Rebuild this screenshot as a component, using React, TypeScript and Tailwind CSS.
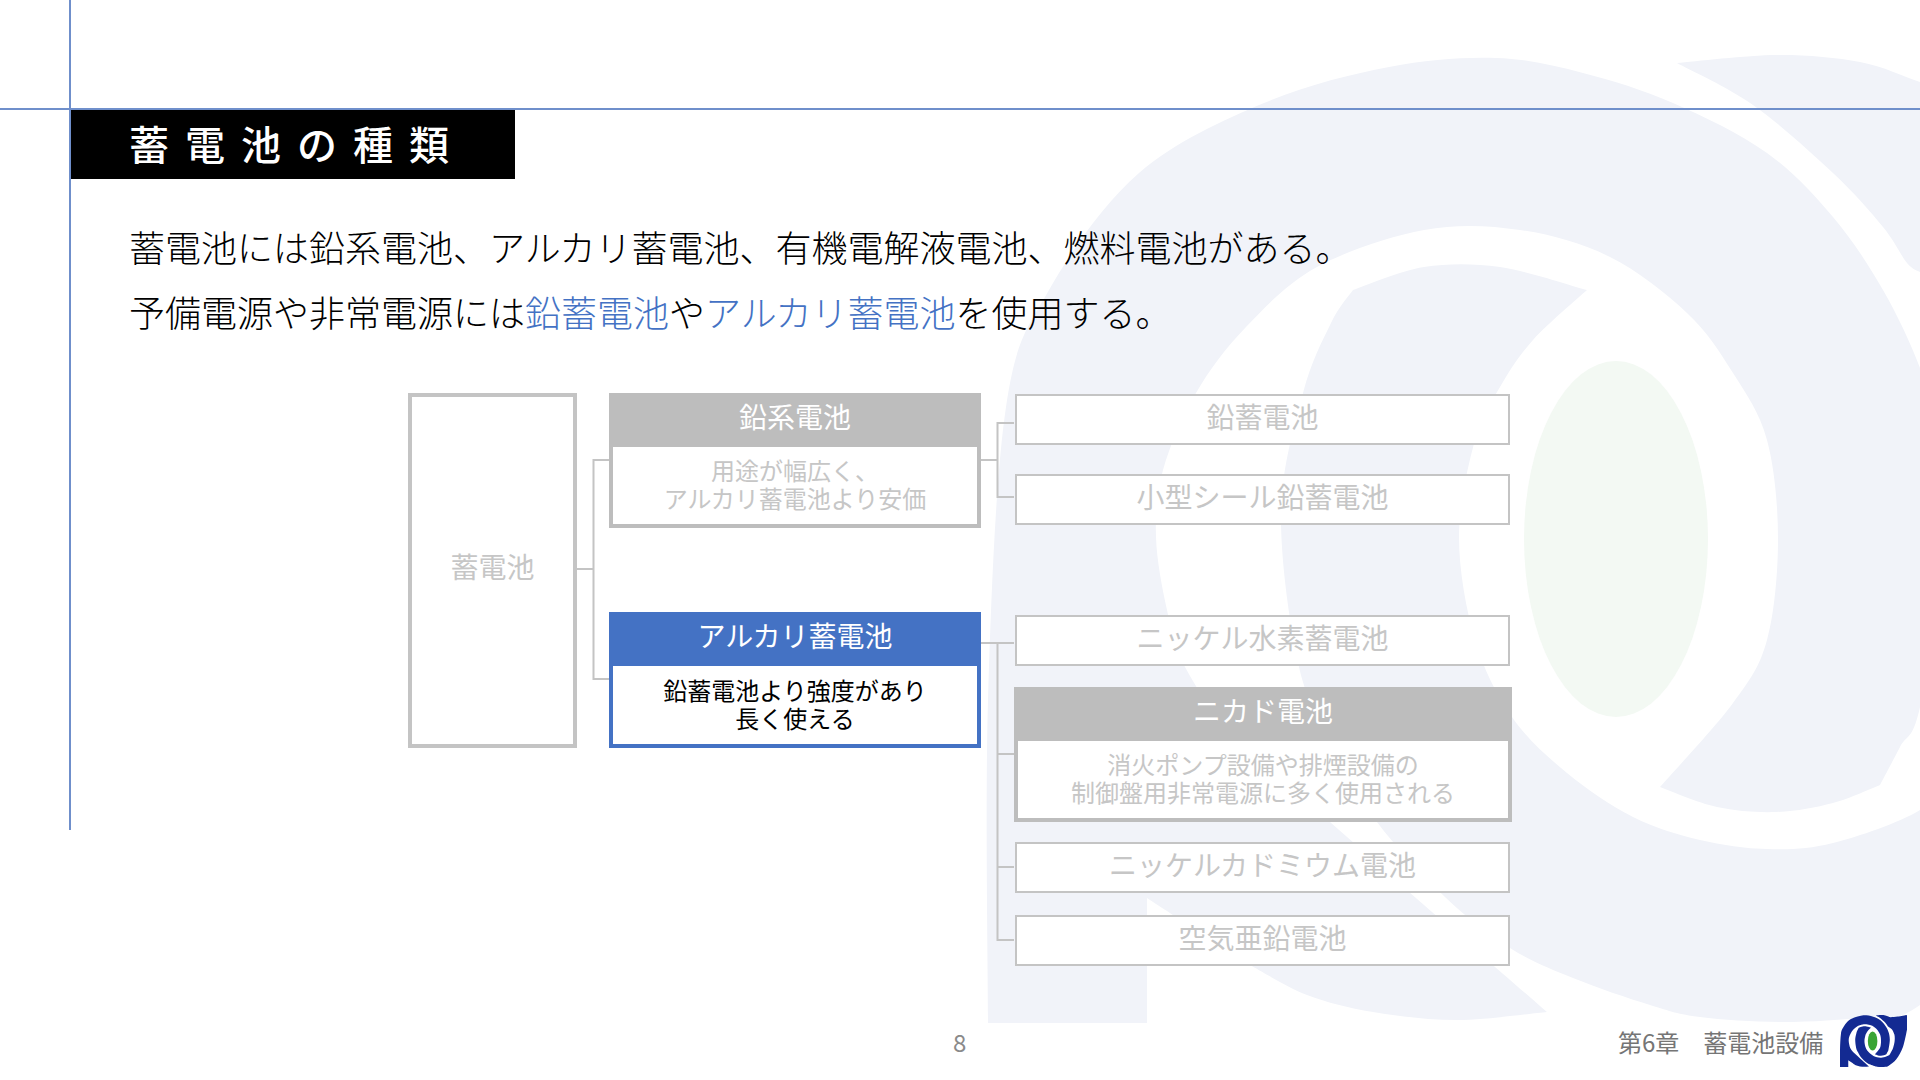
import React from "react";

const FONT = { fontFamily: '"Noto Sans CJK JP", "Noto Sans", sans-serif' };

const smooth = (pts: number[][]) => {
  let d = `M${pts[0][0]} ${pts[0][1]}`;
  for (let i = 0; i < pts.length - 1; i++) {
    const p0 = pts[Math.max(0, i - 1)], p1 = pts[i], p2 = pts[i + 1], p3 = pts[Math.min(pts.length - 1, i + 2)];
    const c1 = [p1[0] + (p2[0] - p0[0]) / 6, p1[1] + (p2[1] - p0[1]) / 6];
    const c2 = [p2[0] - (p3[0] - p1[0]) / 6, p2[1] - (p3[1] - p1[1]) / 6];
    d += ` C${c1[0].toFixed(1)} ${c1[1].toFixed(1)} ${c2[0].toFixed(1)} ${c2[1].toFixed(1)} ${p2[0]} ${p2[1]}`;
  }
  return d;
};
const join = (...runs: number[][][]) =>
  runs.map((r, i) => {
    const s = smooth(r);
    return i === 0 ? s : s.replace(/^M/, "L");
  }).join(" ") + " Z";

const RING = join(
  [[988, 1023], [988, 700], [1006, 407], [1049, 290], [1139, 173], [1264, 103], [1389, 67], [1496, 58], [1583, 73], [1673, 103], [1767, 153], [1833, 217], [1883, 290], [1920, 368], [1940, 440], [1946, 540], [1920, 707], [1900, 747], [1880, 785]],
  [[1880, 785], [1833, 803], [1777, 812], [1717, 807], [1660, 787]],
  [[1660, 787], [1733, 703], [1767, 640], [1778, 539], [1767, 440], [1733, 373], [1687, 313], [1610, 257], [1520, 230], [1424, 230], [1317, 267], [1246, 327], [1196, 393], [1163, 470], [1156, 537], [1167, 610], [1185, 667], [1240, 745], [1330, 822], [1424, 905], [1547, 1012]],
  [[1547, 1012], [1457, 1020], [1373, 1012], [1307, 995], [1250, 965]],
  [[1250, 965], [1147, 898]],
  [[1147, 898], [1147, 1023]],
);
const CRESCENT = join(
  [[1587, 290], [1500, 267], [1424, 267], [1353, 290]],
  [[1353, 290], [1331, 323], [1303, 393], [1281, 513], [1299, 667], [1335, 750], [1377, 822], [1445, 897], [1510, 948], [1573, 978], [1650, 1005], [1700, 1017], [1783, 1022], [1867, 1017], [1920, 1005], [2072, 880], [2200, 650], [2278, 330]],
  [[2278, 330], [2278, 55]],
  [[2278, 55], [2100, 85], [1960, 95], [1920, 82], [1860, 62], [1777, 55], [1677, 63]],
  [[1677, 63], [1753, 105], [1833, 173], [1883, 227], [1907, 263], [1920, 272]],
  [[1920, 272], [1985, 320], [2035, 420], [2040, 540], [2010, 670], [1960, 765], [1920, 810], [1833, 843], [1767, 849], [1700, 840], [1633, 817], [1567, 773], [1512, 717], [1475, 640], [1459, 537], [1475, 440], [1500, 387], [1533, 340], [1587, 290]],
);

function Box({ children, className = "" }: { children: React.ReactNode; className?: string }) {
  return (
    <div className={`ml-[1px] flex h-[51px] w-[495px] items-start justify-center border-2 border-[#c4c4c4] bg-white text-[28px] leading-[40px] text-[#c6c6c6] ${className}`}>
      {children}
    </div>
  );
}

function Card({ title, lines, border, headBg, body, className = "" }: { title: string; lines: string[]; border: string; headBg: string; body: string; className?: string }) {
  return (
    <div className={`flex flex-col border-4 ${border} ${className}`}>
      <div className={`flex h-[50px] shrink-0 items-start justify-center text-[28px] leading-[38px] text-white ${headBg}`}>{title}</div>
      <div className={`flex flex-1 flex-col items-center justify-center bg-white pb-[3px] text-[24px] leading-[28px] ${body}`}>
        {lines.map((l) => <div key={l}>{l}</div>)}
      </div>
    </div>
  );
}

export default function App() {
  return (
    <div style={FONT} className="relative h-[1080px] w-[1920px] overflow-hidden bg-white">
      {/* watermark */}
      <svg viewBox="0 0 1920 1080" className="absolute inset-0 h-full w-full">
        <path d={RING} fill="#f1f3f9" />
        <path d={CRESCENT} fill="#f1f3f9" />
        <ellipse cx="1616" cy="539" rx="92" ry="178" fill="#f3f9f3" />
      </svg>

      {/* guide lines */}
      <div className="absolute left-0 top-[108px] h-[2px] w-full bg-[#6f8fcb]" />
      <div className="absolute left-[69px] top-0 h-[830px] w-[2px] bg-[#6f8fcb]" />

      <div className="relative flex h-full flex-col pl-[71px] pt-[110px]">
        <div className="flex h-[69px] w-[444px] items-center bg-black pb-[3px] pl-[58px] text-[40px] font-medium tracking-[16px] text-white">
          蓄電池の種類
        </div>
        <div className="pl-[58px] pt-[35px] text-[36px] font-light leading-[65px] text-black">
          <div>蓄電池には鉛系電池、アルカリ蓄電池、有機電解液電池、燃料電池がある。</div>
          <div>
            予備電源や非常電源には<span className="text-[#4472c4]">鉛蓄電池</span>や<span className="text-[#4472c4]">アルカリ蓄電池</span>を使用する。
          </div>
        </div>

        {/* diagram */}
        <div className="ml-[337px] mt-[49px] flex items-start">
          <div className="flex h-[355px] w-[169px] items-center justify-center border-4 border-[#c4c4c4] bg-white pb-[10px] text-[28px] text-[#c6c6c6]">
            蓄電池
          </div>
          <svg width="32" height="355" className="shrink-0" viewBox="0 0 32 355">
            <path d="M0 176H16M32 67H16.500V286H32" fill="none" stroke="#c4c4c4" strokeWidth="2" />
          </svg>
          <div className="flex w-[372px] flex-col gap-[84px]">
            <Card title="鉛系電池" lines={["用途が幅広く、", "アルカリ蓄電池より安価"]} border="border-[#bdbdbd]" headBg="bg-[#bdbdbd]" body="text-[#c6c6c6]" className="h-[135px]" />
            <Card title="アルカリ蓄電池" lines={["鉛蓄電池より強度があり", "長く使える"]} border="border-[#4472c4]" headBg="bg-[#4472c4]" body="text-black" className="h-[136px]" />
          </div>
          <svg width="33" height="580" className="shrink-0" viewBox="0 0 33 580">
            <path d="M0 67H16.500M33 30H16.500V104H33" fill="none" stroke="#c4c4c4" strokeWidth="2" />
            <path d="M0 250H33M16.500 250V547H33M16.500 361H33M16.500 474H33" fill="none" stroke="#c4c4c4" strokeWidth="2" />
          </svg>
          <div className="flex w-[498px] flex-col pt-[1px]">
            <Box>鉛蓄電池</Box>
            <Box className="mt-[29px]">小型シール鉛蓄電池</Box>
            <Box className="mt-[90px]">ニッケル水素蓄電池</Box>
            <Card title="ニカド電池" lines={["消火ポンプ設備や排煙設備の", "制御盤用非常電源に多く使用される"]} border="border-[#bdbdbd]" headBg="bg-[#bdbdbd]" body="text-[#c6c6c6]" className="mt-[21px] h-[135px] w-[498px]" />
            <Box className="mt-[20px]">ニッケルカドミウム電池</Box>
            <Box className="mt-[22px]">空気亜鉛電池</Box>
          </div>
        </div>

        {/* footer */}
        <div className="absolute bottom-0 left-0 flex h-[68px] w-full items-start">
          <div className="absolute left-[953px] top-[13px] text-[24px] leading-[34px] text-[#8a8a8a]">8</div>
          <div className="absolute left-[1618px] top-[13px] whitespace-pre text-[24px] leading-[34px] text-[#757575]">第6章　蓄電池設備</div>
          <svg viewBox="988 55 1290 968" className="absolute left-[1840px] top-[3px] h-[52px] w-[67px]" preserveAspectRatio="none">
            <path d={RING} fill="#132a92" />
            <path d={CRESCENT} fill="#132a92" />
            <ellipse cx="1616" cy="539" rx="92" ry="178" fill="#3aa535" />
          </svg>
        </div>
      </div>
    </div>
  );
}
